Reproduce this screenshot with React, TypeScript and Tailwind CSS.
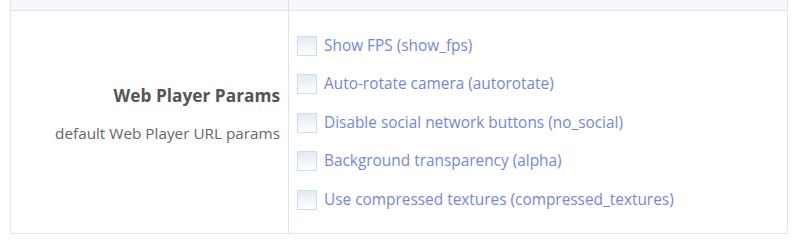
import React from "react";

const items = [
  "Show FPS (show_fps)",
  "Auto-rotate camera (autorotate)",
  "Disable social network buttons (no_social)",
  "Background transparency (alpha)",
  "Use compressed textures (compressed_textures)",
];

export default function App() {
  return (
    <div className="w-[800px] h-[249px] bg-white pl-[10px] pr-[12px]" style={{ fontFamily: '"Open Sans", "Noto Sans", sans-serif' }}>
      <div className="border-l border-r border-b border-[#e1e4f4]">
        <div className="flex h-[11px] bg-[#f7f8fe] border-b border-[#dde1f5]">
          <div className="w-[278px] border-r border-[#dde1f5]" />
          <div className="flex-1" />
        </div>
        <div className="flex h-[222px]">
          <div className="w-[278px] border-r border-[#dde1f5] flex flex-col items-end justify-center pr-[8px] pb-[16px]">
            <div className="text-[17.3px] font-bold text-[#555555] leading-[22px]">Web Player Params</div>
            <div className="text-[15.3px] text-[#666666] leading-[20px] mt-[16px]">default Web Player URL params</div>
          </div>
          <div className="flex-1 flex flex-col pt-[25px] pl-[8px] gap-[18.4px]">
            {items.map((t) => (
              <label key={t} className="flex items-center gap-[7px] h-[20px]">
                <span className="w-[20px] h-[20px] border border-[#bfe3f2] bg-gradient-to-b from-[#e7e9f3] to-white shrink-0" />
                <span className="text-[15.4px] text-[#7686d9] leading-[20px]">{t}</span>
              </label>
            ))}
          </div>
        </div>
      </div>
    </div>
  );
}
